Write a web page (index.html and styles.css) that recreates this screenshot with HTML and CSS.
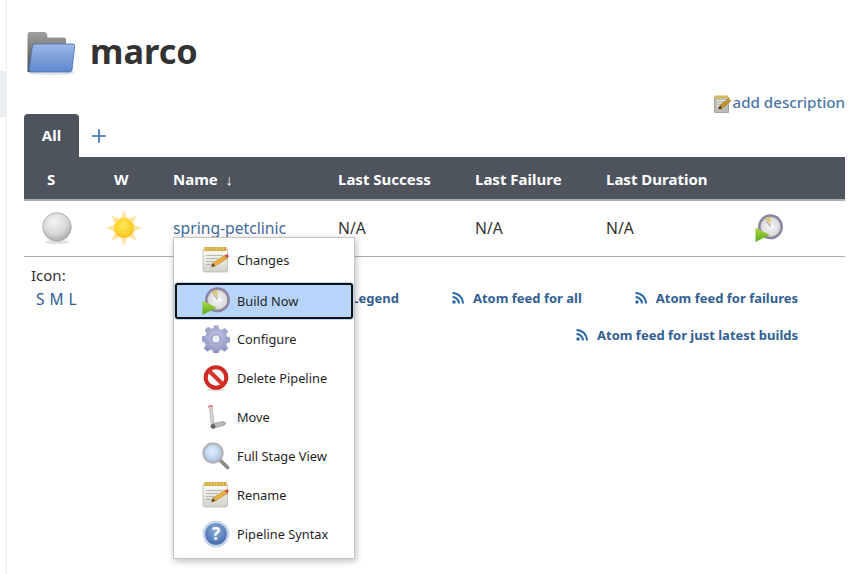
FILE: index.html
```html
<!DOCTYPE html>
<html lang="en">
<head>
<meta charset="utf-8">
<title>marco</title>
<link rel="stylesheet" href="styles.css">
</head>
<body>
<svg class="defs" width="0" height="0" aria-hidden="true">
  <defs>
    <linearGradient id="gFolder" x1="0" y1="0" x2="0" y2="1"><stop offset="0" stop-color="#9db9e6"/><stop offset=".5" stop-color="#7c9fd8"/><stop offset="1" stop-color="#5d88cc"/></linearGradient>
    <linearGradient id="gBack" x1="0" y1="0" x2="0" y2="1"><stop offset="0" stop-color="#a0a0a0"/><stop offset="1" stop-color="#4a4a4a"/></linearGradient>
    <radialGradient id="gBall" cx=".42" cy=".32" r=".72"><stop offset="0" stop-color="#f4f4f4"/><stop offset=".6" stop-color="#d6d6d6"/><stop offset="1" stop-color="#a3a3a3"/></radialGradient>
    <radialGradient id="gSun" cx=".45" cy=".4" r=".6"><stop offset="0" stop-color="#ffe65c"/><stop offset=".7" stop-color="#fdd22b"/><stop offset="1" stop-color="#f5bd1e"/></radialGradient>
    <radialGradient id="gClock" cx=".5" cy=".5" r=".55"><stop offset="0" stop-color="#f6f6f6"/><stop offset=".75" stop-color="#dedede"/><stop offset="1" stop-color="#bdbdbd"/></radialGradient>
    <linearGradient id="gPlay" x1="0" y1="0" x2="0" y2="1"><stop offset="0" stop-color="#aedb3e"/><stop offset="1" stop-color="#5aa81f"/></linearGradient>
    <radialGradient id="gGear" cx=".5" cy=".4" r=".7"><stop offset="0" stop-color="#c6cae6"/><stop offset="1" stop-color="#7f86b8"/></radialGradient>
    <radialGradient id="gLens" cx=".45" cy=".4" r=".6"><stop offset="0" stop-color="#e4effb"/><stop offset="1" stop-color="#a5c3e8"/></radialGradient>
    <radialGradient id="gHelp" cx=".5" cy=".35" r=".7"><stop offset="0" stop-color="#8fb0dd"/><stop offset="1" stop-color="#3d66a8"/></radialGradient>
    <linearGradient id="gNote" x1="0" y1="0" x2="0" y2="1"><stop offset="0" stop-color="#fbfbf4"/><stop offset="1" stop-color="#d2d2ca"/></linearGradient>

    <symbol id="iClock" viewBox="0 0 28 28">
      <circle cx="15.500" cy="12.800" r="12.500" fill="#8d86a3"/>
      <circle cx="15.500" cy="12.800" r="10" fill="url(#gClock)"/>
      <path d="M15.500 12.800 9.500 5A10 10 0 0 1 15.500 2.800Z" fill="#d9c67a"/>
      <path d="M15.500 12.800 11 6.500M15.500 12.800h4" stroke="#fff" stroke-width="2" fill="none"/>
      <path d="M15.500 12.800 11 6.500" stroke="#666" stroke-width=".8" fill="none"/>
      <path d="M.5 13.500 14.500 20.800.5 28Z" fill="url(#gPlay)"/>
    </symbol>
    <symbol id="iNote" viewBox="0 0 28 28">
      <path d="M1 3.500h24.500v20.500q0 2-2 2H3q-2 0-2-2Z" fill="url(#gNote)" stroke="#b9b9ae" stroke-width=".8"/>
      <rect x="2" y="1" width="22.500" height="4" rx=".8" fill="#cfa93f"/>
      <path d="M3 1.300v3M6 1.300v3M9 1.300v3M12 1.300v3M15 1.300v3M18 1.300v3M21 1.300v3" stroke="#f0dc90" stroke-width="1"/>
      <path d="M4 9.500h17M4 12.500h12M4 15.500h8M4 18.500h6" stroke="#b5b8b5" stroke-width="1"/>
      <path d="M9.500 21 11 17 22.500 9.500 25 12.500 13 20Z" fill="#e9b13c" stroke="#a9761f" stroke-width=".5"/>
      <path d="M22.500 9.500 25.500 8 27 10.500 25 12.500Z" fill="#d8534a"/>
      <path d="M9.500 21 11 17 13 20Z" fill="#4b3b2a"/>
    </symbol>
    <symbol id="iNoteSmall" viewBox="0 0 18 18">
      <path d="M.5 2h14v15.500H.5Z" fill="#bdbdb5" stroke="#8f8f88" stroke-width=".7"/>
      <rect x="1" y=".5" width="13" height="2.500" fill="#d9b84e"/>
      <path d="M2.500 5.500h9M2.500 8h6M2.500 10.500h4" stroke="#ededE6" stroke-width="1"/>
      <path d="M4.500 14 6 10.500 14.500 3.500 17 5.800 8 13.500Z" fill="#c98f28" stroke="#7f5b18" stroke-width=".4"/>
      <path d="M4.500 14 6 10.500 8 13.500Z" fill="#3f3527"/>
    </symbol>
    <symbol id="iGear" viewBox="0 0 28 28">
      <path fill="url(#gGear)" d="M11.500 1h5l.7 3.700 2.400 1 3.100-2.100 3.500 3.500-2.100 3.100 1 2.400 3.400.7v5l-3.400.7-1 2.400 2.100 3.100-3.500 3.500-3.100-2.100-2.400 1-.7 3.400h-5l-.7-3.400-2.400-1-3.100 2.100-3.500-3.500 2.100-3.100-1-2.400L0 17v-5l3.700-.7 1-2.400-2.100-3.100 3.500-3.500 3.100 2.100 2.400-1Z" transform="translate(0 -.5) scale(1 .97)"/>
      <circle cx="14" cy="14" r="4.300" fill="#eef0f8" stroke="#7078a8" stroke-width=".8"/>
    </symbol>
    <symbol id="iDelete" viewBox="0 0 28 28">
      <ellipse cx="14" cy="26" rx="10" ry="1.500" fill="#e2e2e2"/>
      <circle cx="14" cy="13.500" r="10.300" fill="#f6f6f6" stroke="#cf2a22" stroke-width="4"/>
      <path d="M6.500 6.300 21.500 21" stroke="#d8342b" stroke-width="4"/>
    </symbol>
    <symbol id="iMove" viewBox="0 0 28 28">
      <path d="M7.500 5 10 4.500 12 20H9Z" fill="#d9d9d9" stroke="#9a9a9a" stroke-width=".6"/>
      <path d="M6.500 4.500C7 2.500 9.500 2 10.500 4" fill="none" stroke="#c9434a" stroke-width="1.200"/>
      <path d="M10 21 21 18.500l2.500 1-.8 2.500-12 3.500Z" fill="#bdbdbd" stroke="#7d7d7d" stroke-width=".6"/>
      <circle cx="11" cy="23.300" r="2.400" fill="#666"/>
    </symbol>
    <symbol id="iSearch" viewBox="0 0 28 28">
      <path d="M17.500 17.500 25.500 25.500" stroke="#8d8d8d" stroke-width="3.800" stroke-linecap="round"/>
      <circle cx="11" cy="11" r="9.500" fill="url(#gLens)" stroke="#b4b4ba" stroke-width="2.500"/>
    </symbol>
    <symbol id="iHelp" viewBox="0 0 28 28">
      <circle cx="14" cy="14" r="13.300" fill="#c5d4ea"/>
      <circle cx="14" cy="14" r="10.800" fill="url(#gHelp)"/>
      <text x="14" y="20" text-anchor="middle" class="help-mark">?</text>
    </symbol>
    <symbol id="iRss" viewBox="0 0 12 12">
      <circle cx="2" cy="10" r="1.800" fill="currentColor"/>
      <path d="M.5 5a6.500 6.500 0 0 1 6.500 6.500M.5 1a10.500 10.500 0 0 1 10.500 10.500" fill="none" stroke="currentColor" stroke-width="2.100"/>
    </symbol>
  </defs>
</svg>

<div class="page">
  <aside class="rail"><div class="rail-mark"></div></aside>
  <main class="main">
    <header class="title-row">
      <svg class="folder" viewBox="0 0 52 48" aria-hidden="true">
        <ellipse cx="27" cy="46" rx="24" ry="2" fill="#e2e2e2"/>
        <path d="M3.500 7q0-2 2-2h15q2 0 2.500 2l.5 3.500h16q2.500 0 2.500 2.500V45H3.500Z" fill="url(#gBack)"/>
        <path d="M11 17h38q2 0 1.700 2.500L48 43q-.3 2-2.500 2H7q-2.300 0-2-2L8.500 19q.3-2 2.500-2Z" fill="url(#gFolder)" stroke="#4a70b2" stroke-width=".8"/>
      </svg>
      <h1 class="title">marco</h1>
    </header>
    <div class="desc-row">
      <a class="add-desc" href="#"><svg class="desc-icon" aria-hidden="true"><use href="#iNoteSmall"/></svg>add description</a>
    </div>
    <nav class="tabs">
      <a class="tab active" href="#">All</a>
      <a class="tab-add" href="#" aria-label="New view"><svg viewBox="0 0 14 14" aria-hidden="true"><path d="M7 0v14M0 7h14" stroke="currentColor" stroke-width="1.600"/></svg></a>
    </nav>
    <table class="jobs">
      <thead>
        <tr>
          <th class="c-s">S</th>
          <th class="c-w">W</th>
          <th class="c-name">Name&nbsp; ↓</th>
          <th class="c-succ">Last Success</th>
          <th class="c-fail">Last Failure</th>
          <th class="c-dur">Last Duration</th>
          <th class="c-act"></th>
        </tr>
      </thead>
      <tbody>
        <tr>
          <td class="c-s"><svg class="ball" viewBox="0 0 32 32" aria-hidden="true"><ellipse cx="16" cy="30" rx="12" ry="2" fill="#e2e2e2"/><circle cx="16" cy="15" r="14.300" fill="url(#gBall)" stroke="#b5b5b5"/></svg></td>
          <td class="c-w"><svg class="sun" viewBox="0 0 36 36" aria-hidden="true"><g fill="#fde6a8"><path d="M18 0l4 9h-8Z"/><path d="M18 36l4-9h-8Z"/><path d="M0 18l9 4v-8Z"/><path d="M36 18l-9 4v-8Z"/><path d="M5.500 5.500l9 3.500-5.500 5.500Z"/><path d="M30.500 5.500l-9 3.500 5.500 5.500Z"/><path d="M5.500 30.500l9-3.500-5.500-5.500Z"/><path d="M30.500 30.500l-9-3.500 5.500-5.500Z"/></g><circle cx="18" cy="18" r="10" fill="url(#gSun)"/></svg></td>
          <td class="c-name"><a href="#">spring-petclinic</a></td>
          <td>N/A</td>
          <td>N/A</td>
          <td>N/A</td>
          <td class="c-act"><svg class="clock" aria-hidden="true"><use href="#iClock"/></svg></td>
        </tr>
      </tbody>
    </table>
    <section class="foot">
      <div class="icon-size">
        <div class="icon-label">Icon:</div>
        <div class="sizes"><a href="#">S</a><a href="#">M</a><a href="#">L</a></div>
      </div>
      <div class="feeds">
        <div class="feed-row">
          <a href="#">Legend</a>
          <a class="feed-gap" href="#"><svg aria-hidden="true"><use href="#iRss"/></svg>Atom feed for all</a>
          <a class="feed-gap" href="#"><svg aria-hidden="true"><use href="#iRss"/></svg>Atom feed for failures</a>
        </div>
        <div class="feed-row">
          <a href="#"><svg aria-hidden="true"><use href="#iRss"/></svg>Atom feed for just latest builds</a>
        </div>
      </div>
    </section>
  </main>
</div>

<ul class="menu">
  <li><svg aria-hidden="true"><use href="#iNote"/></svg>Changes</li>
  <li class="focus"><svg aria-hidden="true"><use href="#iClock"/></svg>Build Now</li>
  <li><svg aria-hidden="true"><use href="#iGear"/></svg>Configure</li>
  <li><svg aria-hidden="true"><use href="#iDelete"/></svg>Delete Pipeline</li>
  <li><svg aria-hidden="true"><use href="#iMove"/></svg>Move</li>
  <li><svg aria-hidden="true"><use href="#iSearch"/></svg>Full Stage View</li>
  <li><svg aria-hidden="true"><use href="#iNote"/></svg>Rename</li>
  <li><svg aria-hidden="true"><use href="#iHelp"/></svg>Pipeline Syntax</li>
</ul>
</body>
</html>
```
FILE: styles.css
```css
* { box-sizing: border-box; }
html, body { margin: 0; height: 100%; overflow: hidden; background: #fff; }
body { font-family: "Noto Sans", "Open Sans", sans-serif; font-size: 15px; color: #333; }
a { color: #315f93; text-decoration: none; }
.defs { position: absolute; }
.help-mark { font: 700 17px "Noto Sans", sans-serif; fill: #fff; }

.page { display: flex; height: 574px; }
.rail { width: 7px; flex: none; border-right: 1px solid #eceef0; padding-top: 71px; }
.rail-mark { height: 46px; background: #e9edf0; }
.main { width: 838px; padding-left: 17px; flex: none; }

.title-row { display: flex; align-items: center; height: 46px; margin-top: 28px; gap: 14px; }
.folder { width: 52px; height: 48px; flex: none; }
.title { margin: 0; font-size: 34.300px; line-height: 46px; font-weight: 700; color: #333; }

.desc-row { display: flex; justify-content: flex-end; height: 40px; padding-top: 18px; }
.add-desc { display: flex; align-items: center; height: 20px; font-size: 15.100px; font-weight: 500; color: #4a77a5; }
.desc-icon { width: 18px; height: 18px; margin-top: 4px; margin-right: 1px; }

.tabs { display: flex; height: 43px; }
.tab { width: 55px; display: flex; align-items: center; justify-content: center; padding-bottom: 1px; font-weight: 700; font-size: 15px; border-radius: 4px 4px 0 0; }
.tab.active { background: #4d545d; color: #fff; }
.tab-add { display: flex; align-items: center; margin-left: 13px; padding-top: 1px; color: #2f6ba8; }
.tab-add svg { width: 14px; height: 14px; }

.jobs { width: 821px; border-collapse: collapse; table-layout: fixed; }
.jobs th { height: 43px; padding: 1px 0 0; background: #4d545d; color: #fff; text-align: left; font-size: 15px; font-weight: 700; border-bottom: 2px solid #a6adb5; }
.jobs td { height: 56px; padding: 0; font-size: 15.700px; color: #333; border-bottom: 1px solid #a6adb5; vertical-align: middle; }
.jobs .c-s { width: 66px; }
.jobs .c-w { width: 83px; }
.jobs .c-name { width: 165px; }
.jobs .c-succ { width: 137px; }
.jobs .c-fail { width: 131px; }
.jobs .c-dur { width: 149px; }
.jobs .c-act { width: auto; }
.jobs th.c-s { padding-left: 23px; }
.jobs th.c-w { padding-left: 24px; }
.jobs td.c-w { padding-left: 16px; }
.jobs td.c-name a { color: #3f6b9c; }
.jobs svg { display: block; }
.ball { width: 32px; height: 32px; margin-left: 17px; }
.sun { width: 36px; height: 36px; }
.clock { width: 28px; height: 28px; }

.foot { display: flex; height: 110px; padding-top: 9px; }
.icon-size { width: 150px; padding-left: 7px; font-size: 15px; }
.icon-label { height: 23px; line-height: 18px; }
.sizes { display: flex; gap: 5px; padding-left: 5px; font-size: 15.500px; line-height: 20px; }
.sizes a { color: #315f93; }

.feeds { flex: 1; padding: 23px 47px 0 0; font-size: 13px; font-weight: 700; }
.feed-row { display: flex; justify-content: flex-end; height: 37px; align-items: flex-start; line-height: 18px; }
.feed-row a { display: flex; align-items: center; color: #315f93; white-space: nowrap; }
.feed-row svg { width: 12px; height: 12px; margin-right: 9px; color: #2f6ba8; }
.feed-gap { margin-left: 53px; }

.menu { position: absolute; left: 173px; top: 237px; width: 182px; height: 322px; margin: 0; padding: 2px 0 0; list-style: none; background: #fff; border: 1px solid #c6c6c6; box-shadow: 1px 2px 7px rgba(0,0,0,.28); font-size: 12.800px; color: #1f1f1f; }
.menu li { display: flex; align-items: center; height: 39px; padding-left: 28px; white-space: nowrap; }
.menu li svg { width: 28px; height: 28px; margin-right: 7px; flex: none; }
.menu li.focus { margin: 4px 1px 0; padding: 0 0 1px 25px; height: 36px; background: #b7d4fb; border: 2px solid #111; border-radius: 3px; box-shadow: 0 0 0 1px #b7d4fb; }
```
